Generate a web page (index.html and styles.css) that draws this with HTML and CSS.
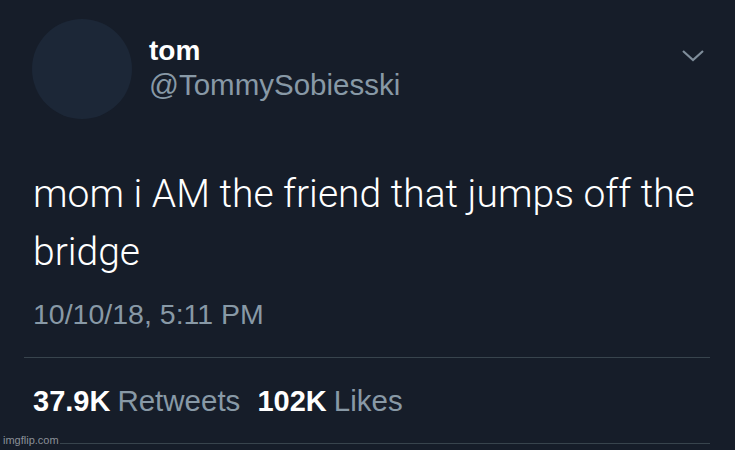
FILE: index.html
```html
<!DOCTYPE html>
<html>
<head>
<meta charset="utf-8">
<link rel="stylesheet" href="styles.css">
</head>
<body>
<div class="tweet">
  <div class="header">
    <div class="avatar"></div>
    <div class="names">
      <div class="name">tom</div>
      <div class="handle">@TommySobiesski</div>
    </div>
    <svg class="chevron" width="24" height="14" viewBox="0 0 24 14"><path d="M2 2 L12 11 L22 2" fill="none" stroke="#7f8d9a" stroke-width="2.2"/></svg>
  </div>
  <div class="text">mom i AM the friend that jumps off the bridge</div>
  <div class="date">10/10/18, 5:11 PM</div>
  <div class="divider"></div>
  <div class="stats">
    <span class="num">37.9K</span><span class="label">Retweets</span>
    <span class="num">102K</span><span class="label">Likes</span>
  </div>
  <div class="divider last"></div>
</div>
<div class="watermark">imgflip.com</div>
</body>
</html>
```
FILE: styles.css
```css
html, body {
  margin: 0;
  padding: 0;
  background: #161d29;
  width: 735px;
  height: 450px;
  overflow: hidden;
  font-family: "Liberation Sans", Arial, sans-serif;
}
.tweet {
  padding: 19px 25px 0 33px;
}
.header {
  display: flex;
  align-items: flex-start;
}
.avatar {
  width: 100px;
  height: 100px;
  border-radius: 50%;
  background: #1c2737;
  margin-left: -1px;
  flex: none;
}
.names {
  margin-left: 17px;
  margin-top: 15px;
  flex: 1;
}
.name {
  color: #ffffff;
  font-weight: bold;
  font-size: 28px;
  line-height: 34px;
}
.handle {
  color: #8899a6;
  font-size: 29.5px;
  line-height: 34px;
}
.chevron {
  margin-top: 30px;
  margin-right: 5px;
}
.text {
  margin-top: 46px;
  color: #ffffff;
  font-family: Roboto, "Liberation Sans", sans-serif;
  font-weight: 300;
  font-size: 39px;
  line-height: 58px;
}
.date {
  color: #8899a6;
  font-size: 28.5px;
  line-height: 34px;
  margin-top: 16px;
}
.divider {
  height: 1px;
  background: #38444d;
  margin-left: -9px;
  margin-top: 26px;
}
.stats {
  font-size: 29px;
  line-height: 34px;
  margin-top: 26px;
}
.num {
  color: #ffffff;
  font-weight: bold;
}
.label {
  color: #8899a6;
  font-size: 29.5px;
  margin-left: 7px;
  margin-right: 9px;
}
.divider.last {
  margin-top: 25px;
}
.watermark {
  position: absolute;
  left: 3px;
  top: 434px;
  font-size: 11px;
  color: #8a9098;
  background: #161d29;
  padding-right: 1px;
}
```
